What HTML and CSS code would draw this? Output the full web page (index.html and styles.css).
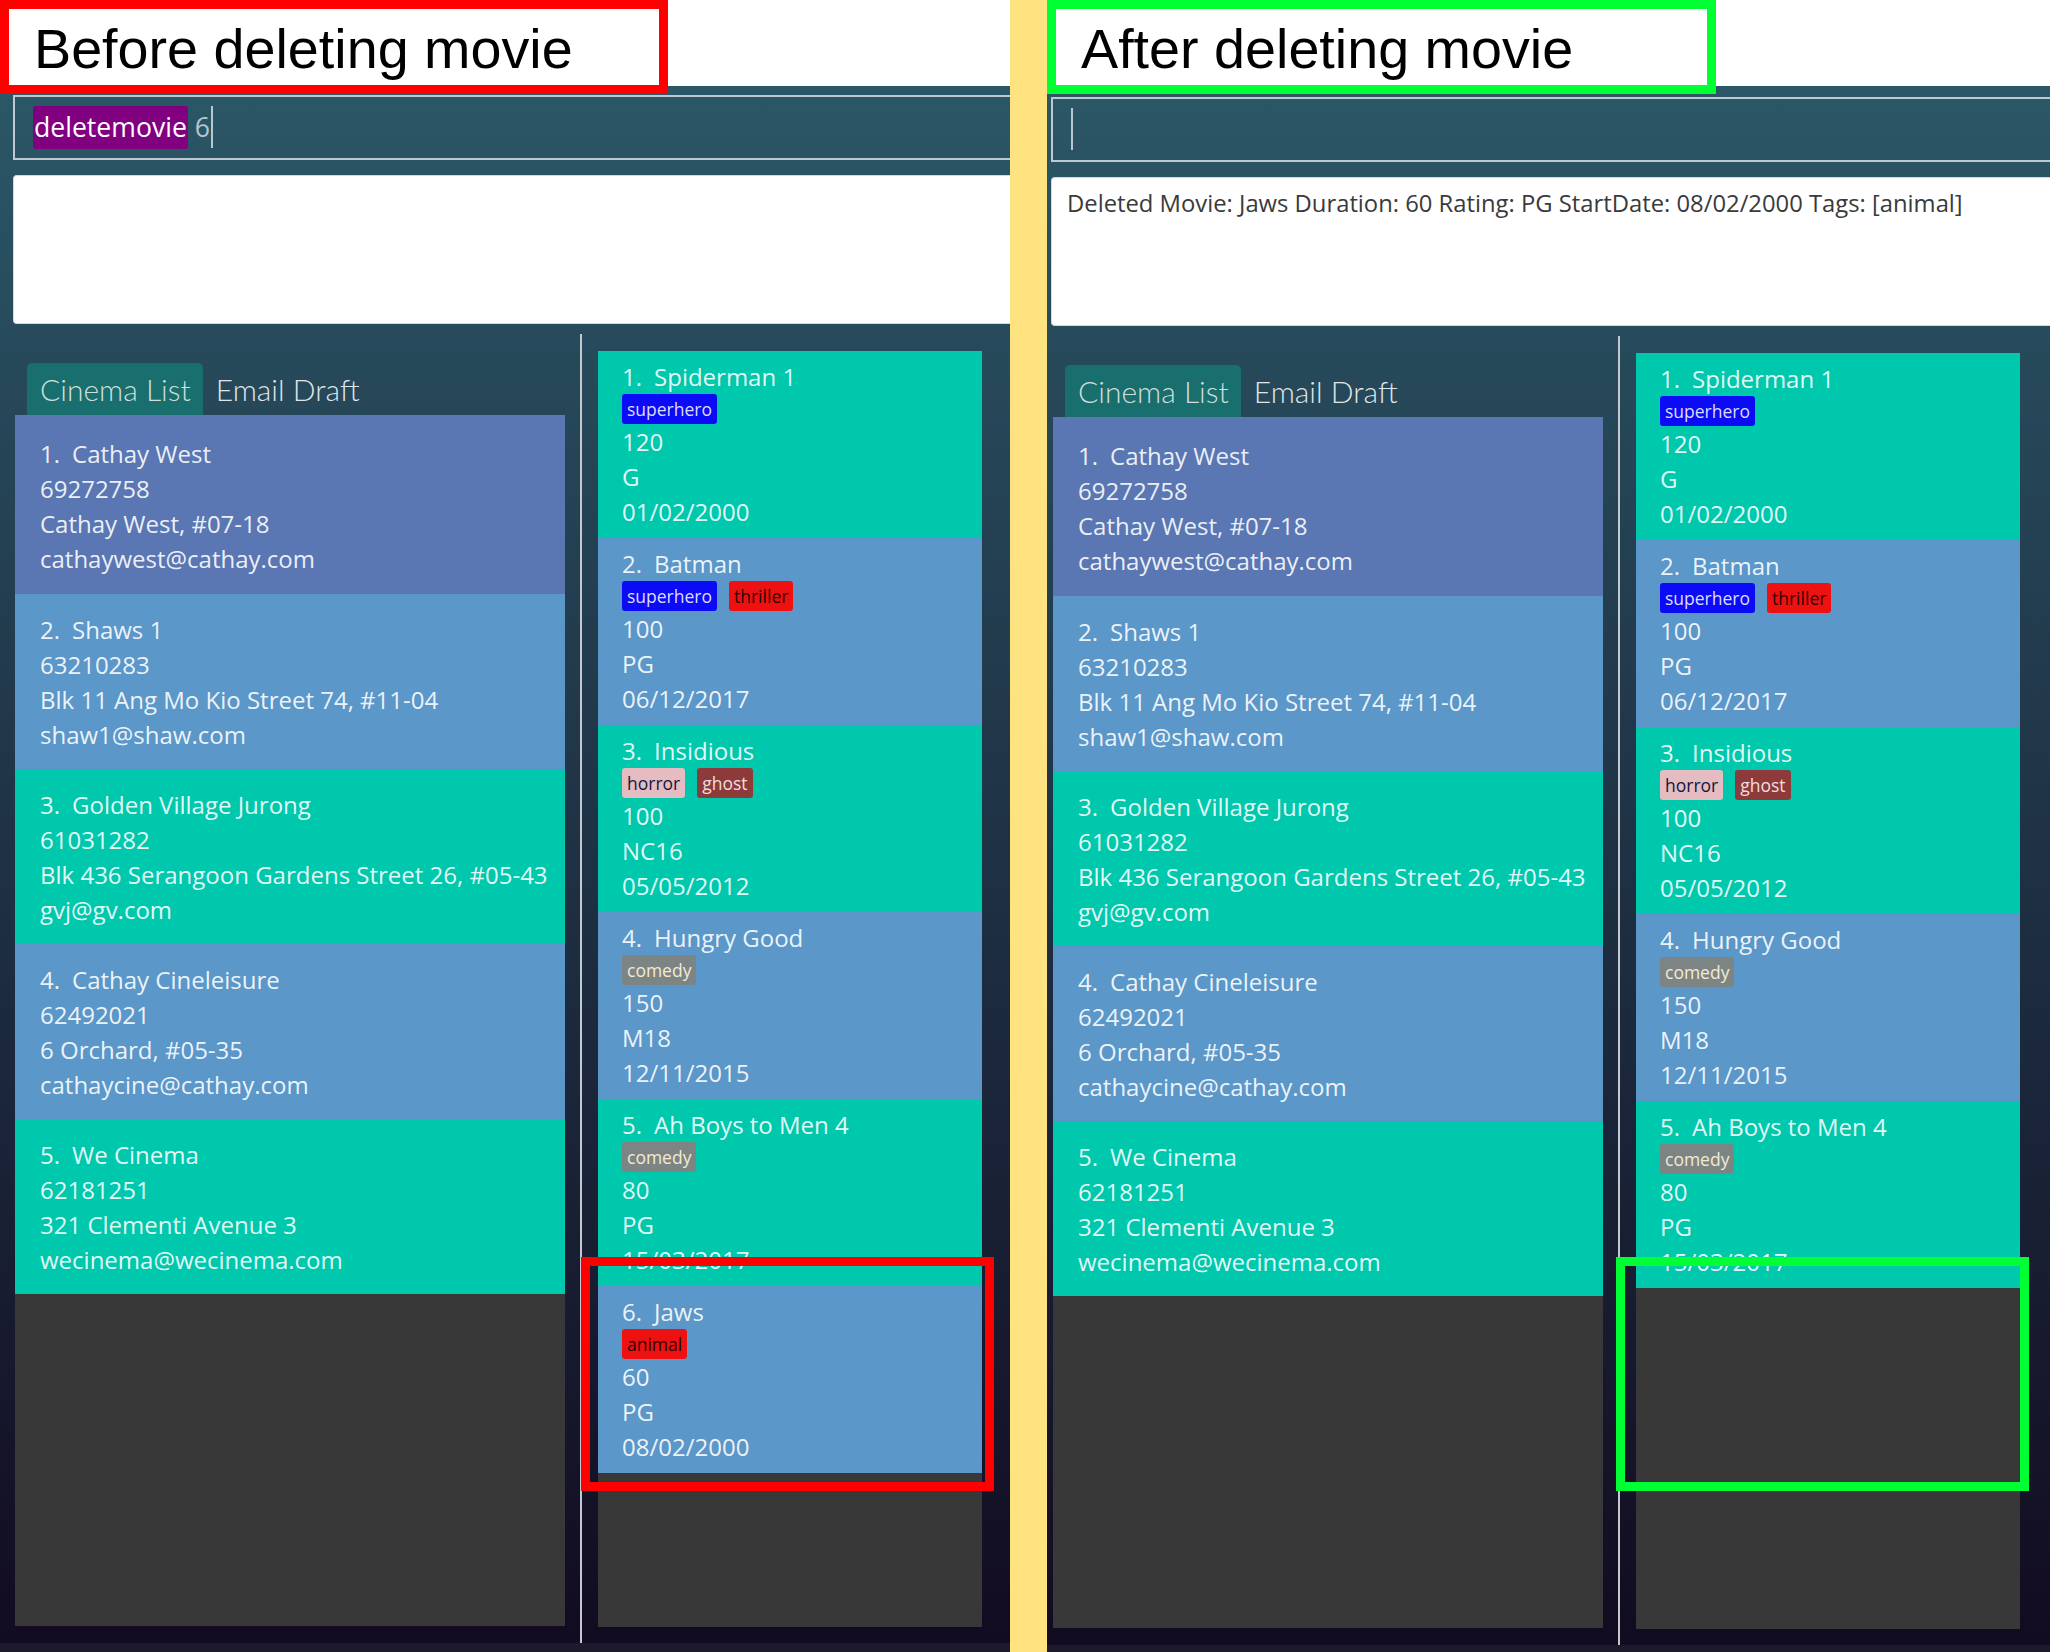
FILE: index.html
```html
<!DOCTYPE html>
<html lang="en">
<head>
<meta charset="utf-8">
<title>Delete movie – before and after</title>
<link rel="stylesheet" href="styles.css">
</head>
<body>
<div class="page">
  <section class="half half-left">
    <div class="header"></div>
    <div class="app">
      <div class="cmd">
        <span class="cmd-word">deletemovie</span><span class="cmd-arg">&nbsp;6</span><span class="caret"></span>
      </div>
      <div class="result"></div>
      <div class="lists">
        <div class="left-pane">
          <div class="tabs">
            <div class="tab tab-active">Cinema List</div>
            <div class="tab">Email Draft</div>
          </div>
          <div class="cinema-list">
            <div class="card c-sel"><div class="line"><span class="idx">1.</span>Cathay West</div><div class="line">69272758</div><div class="line">Cathay West, #07-18</div><div class="line">cathaywest@cathay.com</div></div>
            <div class="card c-blue"><div class="line"><span class="idx">2.</span>Shaws 1</div><div class="line">63210283</div><div class="line">Blk 11 Ang Mo Kio Street 74, #11-04</div><div class="line">shaw1@shaw.com</div></div>
            <div class="card c-teal"><div class="line"><span class="idx">3.</span>Golden Village Jurong</div><div class="line">61031282</div><div class="line">Blk 436 Serangoon Gardens Street 26, #05-43</div><div class="line">gvj@gv.com</div></div>
            <div class="card c-blue"><div class="line"><span class="idx">4.</span>Cathay Cineleisure</div><div class="line">62492021</div><div class="line">6 Orchard, #05-35</div><div class="line">cathaycine@cathay.com</div></div>
            <div class="card c-teal"><div class="line"><span class="idx">5.</span>We Cinema</div><div class="line">62181251</div><div class="line">321 Clementi Avenue 3</div><div class="line">wecinema@wecinema.com</div></div>
          </div>
        </div>
        <div class="divider"></div>
        <div class="right-pane">
          <div class="movie-list">
            <div class="movie c-teal"><div class="line"><span class="idx">1.</span>Spiderman 1</div><div class="tags"><span class="tag t-super">superhero</span></div><div class="line">120</div><div class="line">G</div><div class="line">01/02/2000</div></div>
            <div class="movie c-blue"><div class="line"><span class="idx">2.</span>Batman</div><div class="tags"><span class="tag t-super">superhero</span><span class="tag t-red">thriller</span></div><div class="line">100</div><div class="line">PG</div><div class="line">06/12/2017</div></div>
            <div class="movie c-teal"><div class="line"><span class="idx">3.</span>Insidious</div><div class="tags"><span class="tag t-horror">horror</span><span class="tag t-ghost">ghost</span></div><div class="line">100</div><div class="line">NC16</div><div class="line">05/05/2012</div></div>
            <div class="movie c-blue"><div class="line"><span class="idx">4.</span>Hungry Good</div><div class="tags"><span class="tag t-comedy">comedy</span></div><div class="line">150</div><div class="line">M18</div><div class="line">12/11/2015</div></div>
            <div class="movie c-teal"><div class="line"><span class="idx">5.</span>Ah Boys to Men 4</div><div class="tags"><span class="tag t-comedy">comedy</span></div><div class="line">80</div><div class="line">PG</div><div class="line">15/03/2017</div></div>
            <div class="movie c-blue"><div class="line"><span class="idx">6.</span>Jaws</div><div class="tags"><span class="tag t-red">animal</span></div><div class="line">60</div><div class="line">PG</div><div class="line">08/02/2000</div></div>
          </div>
        </div>
      </div>
      <div class="status"></div>
    </div>
  </section>

  <div class="separator"></div>

  <section class="half half-right">
    <div class="header"></div>
    <div class="app app-shift">
      <div class="cmd">
        <span class="caret caret-empty"></span>
      </div>
      <div class="result">Deleted Movie: Jaws Duration: 60 Rating: PG StartDate: 08/02/2000 Tags: [animal]</div>
      <div class="lists">
        <div class="left-pane">
          <div class="tabs">
            <div class="tab tab-active">Cinema List</div>
            <div class="tab">Email Draft</div>
          </div>
          <div class="cinema-list">
            <div class="card c-sel"><div class="line"><span class="idx">1.</span>Cathay West</div><div class="line">69272758</div><div class="line">Cathay West, #07-18</div><div class="line">cathaywest@cathay.com</div></div>
            <div class="card c-blue"><div class="line"><span class="idx">2.</span>Shaws 1</div><div class="line">63210283</div><div class="line">Blk 11 Ang Mo Kio Street 74, #11-04</div><div class="line">shaw1@shaw.com</div></div>
            <div class="card c-teal"><div class="line"><span class="idx">3.</span>Golden Village Jurong</div><div class="line">61031282</div><div class="line">Blk 436 Serangoon Gardens Street 26, #05-43</div><div class="line">gvj@gv.com</div></div>
            <div class="card c-blue"><div class="line"><span class="idx">4.</span>Cathay Cineleisure</div><div class="line">62492021</div><div class="line">6 Orchard, #05-35</div><div class="line">cathaycine@cathay.com</div></div>
            <div class="card c-teal"><div class="line"><span class="idx">5.</span>We Cinema</div><div class="line">62181251</div><div class="line">321 Clementi Avenue 3</div><div class="line">wecinema@wecinema.com</div></div>
          </div>
        </div>
        <div class="divider"></div>
        <div class="right-pane">
          <div class="movie-list">
            <div class="movie c-teal"><div class="line"><span class="idx">1.</span>Spiderman 1</div><div class="tags"><span class="tag t-super">superhero</span></div><div class="line">120</div><div class="line">G</div><div class="line">01/02/2000</div></div>
            <div class="movie c-blue"><div class="line"><span class="idx">2.</span>Batman</div><div class="tags"><span class="tag t-super">superhero</span><span class="tag t-red">thriller</span></div><div class="line">100</div><div class="line">PG</div><div class="line">06/12/2017</div></div>
            <div class="movie c-teal"><div class="line"><span class="idx">3.</span>Insidious</div><div class="tags"><span class="tag t-horror">horror</span><span class="tag t-ghost">ghost</span></div><div class="line">100</div><div class="line">NC16</div><div class="line">05/05/2012</div></div>
            <div class="movie c-blue"><div class="line"><span class="idx">4.</span>Hungry Good</div><div class="tags"><span class="tag t-comedy">comedy</span></div><div class="line">150</div><div class="line">M18</div><div class="line">12/11/2015</div></div>
            <div class="movie c-teal"><div class="line"><span class="idx">5.</span>Ah Boys to Men 4</div><div class="tags"><span class="tag t-comedy">comedy</span></div><div class="line">80</div><div class="line">PG</div><div class="line">15/03/2017</div></div>
          </div>
        </div>
      </div>
      <div class="status"></div>
    </div>
  </section>

  <div class="note note-red note-title-left">Before deleting movie</div>
  <div class="note note-green note-title-right">After deleting movie</div>
  <div class="note note-red note-mark-left"></div>
  <div class="note note-green note-mark-right"></div>
</div>
</body>
</html>
```

FILE: styles.css
```css
* { box-sizing: border-box; }

html, body {
  margin: 0;
  padding: 0;
  background: #ffffff;
}

.page {
  position: relative;
  width: 2050px;
  height: 1652px;
  overflow: hidden;
  display: flex;
  font-family: "Open Sans", "Noto Sans", sans-serif;
}

.half {
  height: 1652px;
  overflow: hidden;
  flex: none;
}
.half-left { width: 1010px; }
.half-right { width: 1003px; }

.separator {
  width: 37px;
  height: 1652px;
  background: #ffe380;
  flex: none;
}

.header {
  height: 86px;
  background: #ffffff;
}

.app {
  width: 1060px;
  height: 1566px;
  display: flex;
  flex-direction: column;
  background: linear-gradient(to bottom, #2b5767 0px, #120b21 1557px);
}
.app-shift {
  margin-left: -9px;
}
.app-shift .cmd { margin-top: 11px; }

/* command box */
.cmd {
  margin: 9px 0 0 13px;
  height: 65px;
  border: 2px solid #bfcad0;
  border-right: none;
  padding: 9px 0 0 18px;
  display: flex;
  align-items: flex-start;
  flex: none;
}
.cmd-word {
  background: #800080;
  color: #ffffff;
  font-size: 26.6px;
  line-height: 35px;
  padding: 4px 1px;
  border-radius: 3px;
}
.cmd-arg {
  color: #b4c6cf;
  font-size: 26.6px;
  line-height: 35px;
  padding: 4px 0;
}
.caret {
  width: 2px;
  height: 42px;
  background: #b9c7ce;
  margin-left: 1px;
}
.caret-empty { margin-left: 0; }

/* result box */
.result {
  margin: 15px 0 0 13px;
  height: 149px;
  flex: none;
  background: #ffffff;
  border: 1px solid #d3d9dd;
  border-right: none;
  border-radius: 4px 0 0 4px;
  padding: 9px 15px;
  font-size: 23.8px;
  line-height: 32px;
  color: #3a3a3a;
  white-space: nowrap;
}

/* lists */
.lists {
  margin-top: 10px;
  height: 1309px;
  display: flex;
  flex: none;
}
.left-pane {
  width: 580px;
  display: flex;
  flex-direction: column;
  flex: none;
}
.tabs {
  margin: 29px 0 0 27px;
  height: 52px;
  display: flex;
  align-items: stretch;
}
.tab {
  font-family: "Lato", "Open Sans", sans-serif;
  font-weight: 300;
  font-size: 30px;
  line-height: 52px;
  color: #dfe6e8;
  padding: 0 12px 0 13px;
  border-radius: 5px 5px 0 0;
}
.tab-active {
  background: #186f6d;
  color: #cfdede;
}

.cinema-list {
  margin-left: 15px;
  width: 550px;
  height: 1211px;
  background: #383838;
}
.divider {
  width: 2px;
  background: #c3c9ce;
  flex: none;
}
.right-pane {
  padding: 17px 0 0 16px;
  flex: none;
}
.movie-list {
  width: 384px;
  height: 1276px;
  background: #383838;
}

.card {
  height: 175px;
  padding: 18px 25px 0 25px;
}
.card.c-sel {
  height: 179px;
  padding-top: 21px;
}
.movie {
  height: 187px;
  padding: 8px 24px 0 24px;
}
.line {
  font-size: 24px;
  line-height: 35px;
  color: rgba(255, 255, 255, 0.9);
  white-space: nowrap;
}
.idx {
  margin-right: 12px;
}

.c-sel  { background: #5a77b4; }
.c-blue { background: #5b97c9; }
.c-teal { background: #00c8ad; }

.tags {
  height: 30px;
  display: flex;
  gap: 12px;
}
.tag {
  font-size: 17.5px;
  line-height: 24px;
  padding: 3px 5px;
  border-radius: 3px;
}
.t-super  { background: #0b0bf5; color: #dcdcff; }
.t-red    { background: #ee1111; color: #2a0505; }
.t-horror { background: #e4bcc2; color: #15183a; }
.t-ghost  { background: #8c3a3a; color: #f2dede; }
.t-comedy { background: #7c8583; color: #f4ead4; }

.status {
  height: 9px;
  background: #1d1a2b;
  flex: none;
}

/* annotation overlays */
.note {
  position: absolute;
  border: 9px solid;
}
.note-red { border-color: #ff0000; }
.note-green { border-color: #00ff33; }

.note-title-left,
.note-title-right {
  top: 0;
  height: 94px;
  background: #ffffff;
  font-family: "Liberation Sans", Arial, sans-serif;
  font-size: 55.7px;
  line-height: 71px;
  padding: 5px 0 0 25px;
  color: #000000;
  white-space: nowrap;
}
.note-title-left { left: 0; width: 668px; }
.note-title-right { left: 1047px; width: 669px; }

.note-mark-left { left: 581px; top: 1257px; width: 413px; height: 234px; }
.note-mark-right { left: 1616px; top: 1257px; width: 413px; height: 234px; }
```
